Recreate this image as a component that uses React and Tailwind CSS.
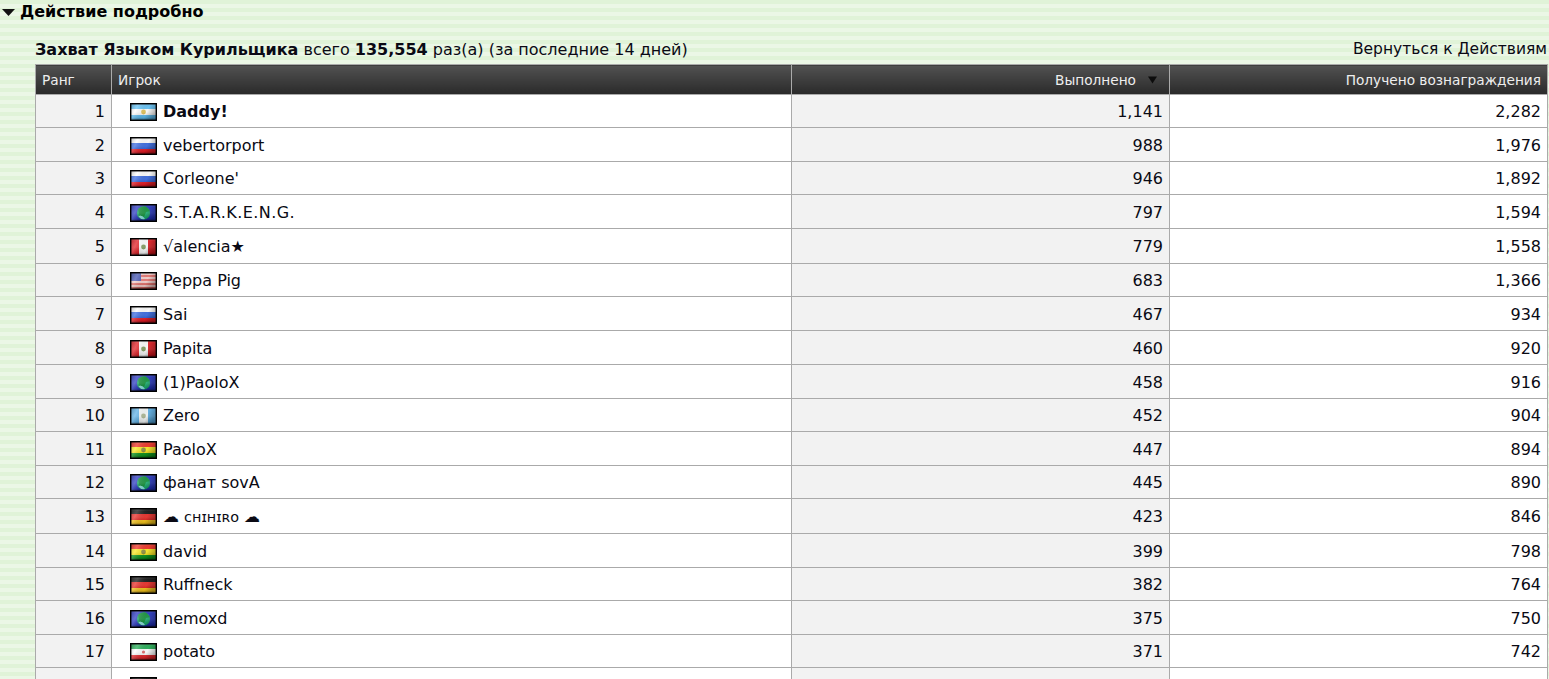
import React from "react";

function Globe() {
  return (
    <>
      <rect width="27" height="18" fill="#2430c0" />
      <circle cx="13.5" cy="9" r="6.6" fill="#14a86c" />
      <path d="M8 5 Q11 1.5 16 2.5 L20 7 L16 8 L14 13 L11 15 Q8 12 9 9Z" fill="#0b8f35" />
      <path d="M8.5 12.5 Q11 16 15 15 L13 12.5 L10 11.5Z" fill="#8fe8e6" />
    </>
  );
}

function Emblem({ c = "#b9a64a" }) {
  return <circle cx="13.5" cy="9" r="2.4" fill={c} />;
}

function FlagArt({ f }) {
  switch (f) {
    case "ar":
      return (
        <>
          <rect width="27" height="18" fill="#ffffff" />
          <rect width="27" height="6" fill="#5fc0f5" />
          <rect y="12" width="27" height="6" fill="#5fc0f5" />
          <Emblem c="#e0c050" />
        </>
      );
    case "ru":
      return (
        <>
          <rect width="27" height="6" fill="#ffffff" />
          <rect y="6" width="27" height="6" fill="#2f62e0" />
          <rect y="12" width="27" height="6" fill="#ee1c25" />
        </>
      );
    case "pe":
      return (
        <>
          <rect width="27" height="18" fill="#ffffff" />
          <rect width="9" height="18" fill="#e0141c" />
          <rect x="18" width="9" height="18" fill="#e0141c" />
          <Emblem c="#7f9a5a" />
        </>
      );
    case "us":
      return (
        <>
          <rect width="27" height="18" fill="#f8cfcc" />
          <rect y="3" width="27" height="2" fill="#e8716c" />
          <rect y="7" width="27" height="2" fill="#e8716c" />
          <rect y="11" width="27" height="2" fill="#e8716c" />
          <rect y="15" width="27" height="2" fill="#e8716c" />
          <rect width="11" height="9" fill="#3e50b0" />
        </>
      );
    case "gt":
      return (
        <>
          <rect width="27" height="18" fill="#f4f8f8" />
          <rect width="9" height="18" fill="#58aee6" />
          <rect x="18" width="9" height="18" fill="#58aee6" />
          <Emblem c="#a9b48f" />
        </>
      );
    case "bo":
      return (
        <>
          <rect width="27" height="6" fill="#f02a1c" />
          <rect y="6" width="27" height="6" fill="#fbe813" />
          <rect y="12" width="27" height="6" fill="#0f9a1e" />
          <Emblem c="#8a8a30" />
        </>
      );
    case "de":
      return (
        <>
          <rect width="27" height="6" fill="#111111" />
          <rect y="6" width="27" height="6" fill="#e8201a" />
          <rect y="12" width="27" height="6" fill="#ffcc1c" />
        </>
      );
    case "ir":
      return (
        <>
          <rect width="27" height="6" fill="#1faa50" />
          <rect y="6" width="27" height="6" fill="#ffffff" />
          <rect y="12" width="27" height="6" fill="#e8262a" />
          <circle cx="13.5" cy="9" r="1.6" fill="#e06060" />
        </>
      );
    default:
      return <Globe />;
  }
}

function Flag({ f, id }) {
  return (
    <svg width="27" height="18" viewBox="0 0 27 18" className="block shrink-0">
      <defs>
        <filter id={`soft-${id}`} x="0" y="0" width="1" height="1">
          <feGaussianBlur stdDeviation="0.7" />
        </filter>
        <linearGradient id={`gloss-${id}`} x1="0" y1="0" x2="0" y2="1">
          <stop offset="0" stopColor="#000" stopOpacity="0.5" />
          <stop offset="0.16" stopColor="#fff" stopOpacity="0.08" />
          <stop offset="0.5" stopColor="#fff" stopOpacity="0.12" />
          <stop offset="0.8" stopColor="#000" stopOpacity="0.1" />
          <stop offset="1" stopColor="#000" stopOpacity="0.6" />
        </linearGradient>
        <linearGradient id={`side-${id}`} x1="0" y1="0" x2="1" y2="0.3">
          <stop offset="0" stopColor="#000" stopOpacity="0.3" />
          <stop offset="0.3" stopColor="#fff" stopOpacity="0.2" />
          <stop offset="0.7" stopColor="#000" stopOpacity="0.03" />
          <stop offset="1" stopColor="#000" stopOpacity="0.3" />
        </linearGradient>
      </defs>
      <g filter={`url(#soft-${id})`}>
        <FlagArt f={f} />
      </g>
      <rect width="27" height="18" fill={`url(#gloss-${id})`} />
      <rect width="27" height="18" fill={`url(#side-${id})`} />
      <rect x="0.7" y="0.7" width="25.6" height="16.6" fill="none" stroke="#000" strokeWidth="1.4" />
    </svg>
  );
}

const rows = [
  { n: "Daddy!", f: "ar", a: "1,141", b: "2,282", bold: true, h: "h-[33px]" },
  { n: "vebertorport", f: "ru", a: "988", b: "1,976", h: "h-[34px]" },
  { n: "Corleone'", f: "ru", a: "946", b: "1,892", h: "h-[33px]" },
  { n: <span className="tracking-[0.45px]">S.T.A.R.K.E.N.G.</span>, f: "un", a: "797", b: "1,594", h: "h-[34px]" },
  { n: "√alencia★", f: "pe", a: "779", b: "1,558", h: "h-[35px]" },
  { n: "Peppa Pig", f: "us", a: "683", b: "1,366", h: "h-[33px]" },
  { n: "Sai", f: "ru", a: "467", b: "934", h: "h-[34px]" },
  { n: "Papita", f: "pe", a: "460", b: "920", h: "h-[34px]" },
  { n: "(1)PaoloX", f: "un", a: "458", b: "916", h: "h-[34px]" },
  { n: "Zero", f: "gt", a: "452", b: "904", h: "h-[33px]" },
  { n: "PaoloX", f: "bo", a: "447", b: "894", h: "h-[34px]" },
  { n: "фанат sovA", f: "un", a: "445", b: "890", h: "h-[33px]" },
  {
    n: (
      <>
        ☁ <span className="text-[14.4px]">ᴄʜɪʜɪʀᴏ</span> ☁
      </>
    ),
    f: "de",
    a: "423",
    b: "846",
    h: "h-[35px]",
  },
  { n: "david", f: "bo", a: "399", b: "798", h: "h-[34px]" },
  { n: "Ruffneck", f: "de", a: "382", b: "764", h: "h-[33px]" },
  { n: "nemoxd", f: "un", a: "375", b: "750", h: "h-[34px]" },
  { n: "potato", f: "ir", a: "371", b: "742", h: "h-[33px]" },
  { n: "J", f: "de", a: "", b: "", h: "h-[34px]" },
];

const thBase =
  "border border-[#aaaaaa] px-[6px] pt-[2px] text-[13.7px] font-normal text-[#eeeeee] bg-gradient-to-b from-[#525252] to-[#2a2a2a]";
const td = "border border-[#aaaaaa] px-[6px] pt-[2px] text-right";

export default function App() {
  return (
    <div className="h-[679px] overflow-hidden bg-[repeating-linear-gradient(180deg,#e0f3d8_0px,#e0f3d8_4px,#ebf7e6_4px,#ebf7e6_8px)] font-['DejaVu_Sans','Noto_Sans_CJK_SC',sans-serif] text-[16px] text-[#0a0a14]">
      <h2 className="flex h-[24px] items-center pl-[2px] text-[16px] font-bold text-black">
        <svg width="13" height="7" viewBox="0 0 13 7" className="mr-[5px]">
          <path d="M0 0H13L6.5 7Z" fill="#111" />
        </svg>
        Действие подробно
      </h2>
      <div className="ml-[35px] mr-[2px] mt-[12px]">
        <div className="flex h-[28px] items-start justify-between pt-[2px]">
          <div>
            <b>Захват Языком Курильщика</b> всего <b>135,554</b> раз(а) (за последние 14 дней)
          </div>
          <div className="text-[15.5px]">Вернуться к Действиям</div>
        </div>
        <table className="w-[1512px] table-fixed border-collapse">
          <colgroup>
            <col className="w-[76px]" />
            <col className="w-[680px]" />
            <col className="w-[378px]" />
            <col className="w-[378px]" />
          </colgroup>
          <thead>
            <tr className="h-[30px]">
              <th className={`${thBase} text-left`}>Ранг</th>
              <th className={`${thBase} text-left`}>Игрок</th>
              <th className={`${thBase} text-right`}>
                <span className="inline-flex items-center">
                  Выполнено
                  <svg width="9" height="8" viewBox="0 0 10 8" className="ml-[12px] mr-[6px]">
                    <path d="M0 0H10L5 8Z" fill="#0c0c0c" />
                  </svg>
                </span>
              </th>
              <th className={`${thBase} text-right`}>Получено вознаграждения</th>
            </tr>
          </thead>
          <tbody>
            {rows.map((r, i) => (
              <tr key={i} className={r.h}>
                <td className={`${td} bg-[#f2f2f2]`}>{i + 1}</td>
                <td className="border border-[#aaaaaa] bg-white pl-[18px] pt-[2px]">
                  <div className="flex items-center gap-[6px]">
                    <Flag f={r.f} id={i} />
                    <span className={r.bold ? "font-bold" : ""}>{r.n}</span>
                  </div>
                </td>
                <td className={`${td} bg-[#f2f2f2]`}>{r.a}</td>
                <td className={`${td} bg-white`}>{r.b}</td>
              </tr>
            ))}
          </tbody>
        </table>
      </div>
    </div>
  );
}
